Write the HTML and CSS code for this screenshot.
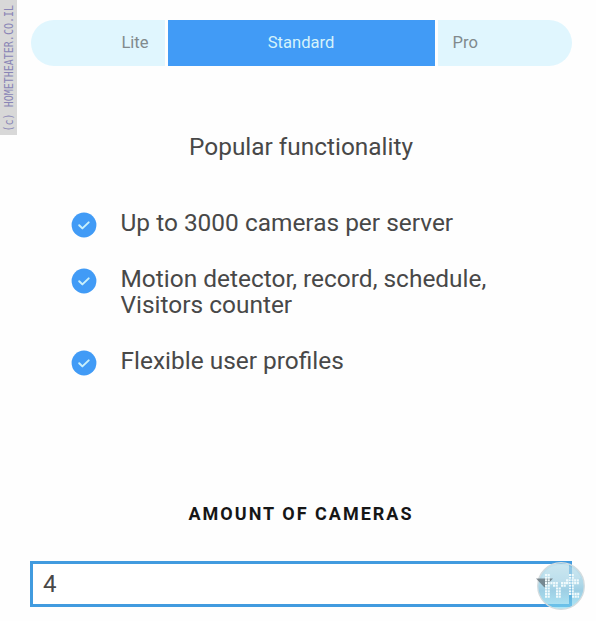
FILE: index.html
```html
<!DOCTYPE html>
<html lang="en">
<head>
<meta charset="utf-8">
<title>Plans</title>
<link rel="stylesheet" href="styles.css">
</head>
<body>
<div class="watermark"><span>(c) HOMETHEATER.CO.IL</span></div>
<main class="page">
  <nav class="tabs">
    <a class="tab lite">Lite</a>
    <a class="tab active">Standard</a>
    <a class="tab pro">Pro</a>
  </nav>
  <h2 class="title"><span>Popular functionality</span></h2>
  <ul class="features">
    <li><svg class="check" viewBox="0 0 26 26"><circle cx="13" cy="13" r="12.4"/><path d="M8.2 13.2l3.2 3.2 6.3-6"/></svg><span>Up to 3000 cameras per server</span></li>
    <li><svg class="check" viewBox="0 0 26 26"><circle cx="13" cy="13" r="12.4"/><path d="M8.2 13.2l3.2 3.2 6.3-6"/></svg><span>Motion detector, record, schedule,<br>Visitors counter</span></li>
    <li><svg class="check" viewBox="0 0 26 26"><circle cx="13" cy="13" r="12.4"/><path d="M8.2 13.2l3.2 3.2 6.3-6"/></svg><span>Flexible user profiles</span></li>
  </ul>
  <h3 class="label">AMOUNT OF CAMERAS</h3>
  <div class="select">
    <span>4</span>
    <svg class="badge" viewBox="0 0 50 50">
      <defs>
        <linearGradient id="orb" x1="0" y1="0" x2="0" y2="1">
          <stop offset="0" stop-color="#a5d5e6"/><stop offset=".45" stop-color="#86c4dd"/><stop offset=".6" stop-color="#6cb6d6"/><stop offset="1" stop-color="#86dcf4"/>
        </linearGradient>
      </defs>
      <circle cx="25" cy="25" r="23.3" fill="url(#orb)" fill-opacity=".66" stroke="#d3dcdf" stroke-width="1.3"/>
      <path d="M5 19Q24 25 45 17Q39 4 25 4Q10 4 5 19z" fill="#fff" opacity=".15"/>
      <path class="arrow" d="M0 17.5h17l-8.5 9z"/>
      <g class="dots">
        <path d="M9 14h5M9 16.7h5M9 19.4h5M9 22.1h13M25 22.1h5M9 24.8h5M17 24.8h5M25 24.8h5M9 27.5h5M20 27.5h5M9 30.2h5M20 30.2h5M9 32.9h5M20 32.9h5M9 35.6h5M20 35.6h5"/>
        <path d="M33 14h5M33 16.7h5M30 19.4h13M30 22.1h13M33 24.8h5M33 27.5h5M33 30.2h5M33 32.9h5M38.5 32.9h5M36 35.6h7"/>
      </g>
    </svg>
  </div>
</main>
</body>
</html>
```

FILE: styles.css
```css
* { box-sizing: border-box; }
body { margin: 0; background: #fefefe; color: #484848; font-family: Roboto, sans-serif; }
.page { width: 596px; height: 621px; padding: 20px 24px 0 30px; overflow: hidden; }
.watermark { position: absolute; left: 0; top: 0; width: 17px; height: 135px; background: #d8d8d8; display: flex; align-items: flex-end; justify-content: center; padding-bottom: 4px; }
.watermark span { writing-mode: vertical-rl; transform: rotate(180deg) scaleX(1.15); font: 10px/13px "DejaVu Sans Mono", monospace; color: #8985b6; white-space: nowrap; }
.tabs { display: grid; grid-template-columns: 134.6px 267px 134.4px; gap: 3px; height: 46px; }
.tab { display: flex; align-items: center; justify-content: center; background: #e0f6fe; color: #818a8d; font-size: 16.6px; padding-bottom: 1px; }
.lite { border-radius: 23px 0 0 23px; justify-content: flex-end; padding-right: 16px; margin-left: 1px; }
.pro { border-radius: 0 23px 23px 0; justify-content: flex-start; padding-left: 15px; }
.tab.active { background: #419bf6; color: #d5f3fb; }
.title { margin: 67px 0 0; font-weight: 400; font-size: 24.4px; line-height: 28px; text-align: center; width: 542px; }
.features { list-style: none; margin: 49px 0 0 41px; padding: 0; font-size: 24.45px; line-height: 26px; display: flex; flex-direction: column; gap: 30.2px; }
.features li { display: flex; align-items: flex-start; gap: 23.5px; }
.check { width: 26px; height: 26px; flex: none; margin: 1.6px 0 -1.6px; }
.check circle { fill: #419bf6; }
.check path { fill: none; stroke: #c9f0fb; stroke-width: 2; stroke-linecap: round; stroke-linejoin: round; }
.label { margin: 127.6px 0 0; width: 542px; text-align: center; font-size: 18px; line-height: 24px; font-weight: 700; letter-spacing: 2px; color: #161616; }
.select { position: relative; margin-top: 35px; width: 542px; height: 46px; border: 3px solid #419bdf; background: #fff; display: flex; align-items: center; padding-left: 10px; font-size: 24px; }
.badge { position: absolute; left: 503px; top: -3px; width: 50px; height: 50px; }
.arrow { fill: #66737b; opacity: .8; }
.dots { fill: none; stroke: #f0fafc; stroke-width: 2.1; stroke-dasharray: 2.1 .6; }
```
